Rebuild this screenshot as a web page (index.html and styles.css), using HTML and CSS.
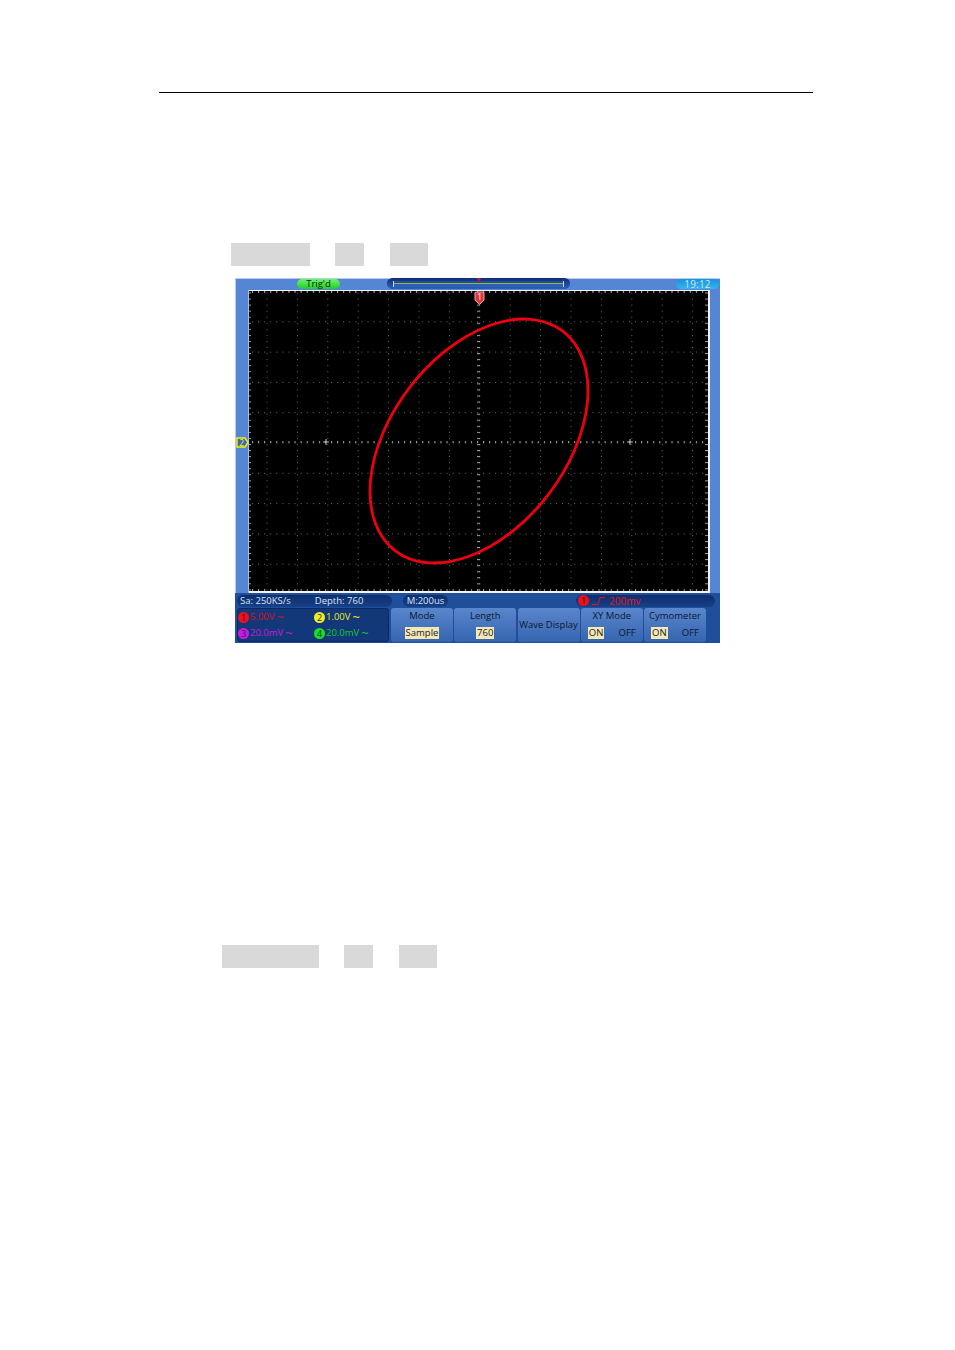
FILE: index.html
```html
<!DOCTYPE html>
<html lang="en">
<head>
<meta charset="utf-8">
<title>Oscilloscope XY mode</title>
<link rel="stylesheet" href="styles.css">
</head>
<body>
<main class="page">
  <div class="rule"></div>
  <div class="redacted first"><span class="w79"></span><span class="w29"></span><span class="w38"></span></div>

  <section class="scope">
    <header class="top">
      <span class="trig">Trig'd</span>
      <div class="timeline"><span class="bar"></span><span class="mark"></span></div>
      <span class="clock">19:12</span>
    </header>

    <div class="plot">
      <svg class="grid" viewBox="0 0 462 303" width="462" height="303" aria-hidden="true">
        <defs>
          <pattern id="hdots" x="4" y="1" width="6.08" height="30.3" patternUnits="userSpaceOnUse">
            <rect x="0" y="0" width="1" height="1" fill="#6e6e6e"/>
          </pattern>
          <pattern id="vdots" x="18.5" y="2.5" width="30.4" height="6.06" patternUnits="userSpaceOnUse">
            <rect x="0" y="0" width="1" height="1" fill="#6e6e6e"/>
          </pattern>
          <pattern id="hticks" x="4" y="0" width="6.08" height="303" patternUnits="userSpaceOnUse">
            <rect x="0" y="0" width="1" height="303" fill="#a4a4a4"/>
          </pattern>
          <pattern id="vticks" x="0" y="2.5" width="462" height="6.06" patternUnits="userSpaceOnUse">
            <rect x="0" y="0" width="462" height="1" fill="#a4a4a4"/>
          </pattern>
        </defs>
        <rect width="462" height="303" fill="#000"/>
        <rect width="460" height="301" fill="url(#hdots)"/>
        <rect width="460" height="301" fill="url(#vdots)"/>
        <!-- centre axes -->
        <rect x="0" y="151" width="460" height="2" fill="url(#hticks)"/>
        <rect x="229" y="3" width="3" height="298" fill="url(#vticks)"/>
        <!-- centre-line crosses -->
        <path d="M78 149V155M75 152H81M382 149V155M379 152H385" stroke="#c0c0c0" stroke-width="1" fill="none"/>
        <!-- edge ticks -->
        <rect x="0" y="1" width="460" height="2" fill="url(#hticks)"/>
        <rect x="0" y="299" width="460" height="2" fill="url(#hticks)"/>
        <rect x="0" y="0" width="3" height="301" fill="url(#vticks)"/>
        <rect x="457" y="0" width="3" height="301" fill="url(#vticks)"/>
        <!-- frame -->
        <rect x="0" y="0" width="462" height="1" fill="#f2f4fa"/>
        <rect x="0" y="301" width="462" height="2" fill="#f2f4fa"/>
        <rect x="0" y="0" width="1" height="303" fill="#b4bccc"/>
        <rect x="460" y="0" width="2" height="303" fill="#f2f4fa"/>
        <ellipse cx="231" cy="151" rx="138.100" ry="87.700" transform="rotate(-52.65 231 151)" fill="none" stroke="#ee0010" stroke-width="2.800"/>
      </svg>
      <svg class="ch-mark" viewBox="0 0 11 14" width="11" height="14" aria-hidden="true">
        <path d="M1 2Q1 1 2 1H9Q10 1 10 2V9L5.500 13.500L1 9Z" fill="#e0343c" stroke="#f0a8a8" stroke-width="1"/>
        <text x="5.500" y="9" class="ch-mark-text">1</text>
      </svg>
      <svg class="level-mark" viewBox="0 0 13 11" width="13" height="11" aria-hidden="true">
        <path d="M1 1H9L12 5.500L9 10H1Z" fill="#3c66b0" stroke="#f2ee10" stroke-width="1.500"/>
        <text x="5.500" y="8.500" class="level-mark-text">2</text>
      </svg>
    </div>

    <div class="status">
      <div class="pill sa"><span>Sa: 250KS/s</span><span>Depth: 760</span></div>
      <div class="pill time">M:200us</div>
      <div class="pill trigger">
        <span class="dot red">1</span>
        <svg class="edge" viewBox="0 0 14 8" width="14" height="8" aria-hidden="true"><path d="M0 7.500H6L8 0.500H13" fill="none" stroke="#e8101c" stroke-width="1"/></svg>
        <span class="trig-level">200mv</span>
      </div>
    </div>

    <div class="controls">
      <div class="channels">
        <div class="chan c1"><span class="dot red">1</span>5.00V<span class="tilde">~</span></div>
        <div class="chan c2"><span class="dot yellow">2</span>1.00V<span class="tilde">~</span></div>
        <div class="chan c3"><span class="dot magenta">3</span>20.0mV<span class="tilde">~</span></div>
        <div class="chan c4"><span class="dot green">4</span>20.0mV<span class="tilde">~</span></div>
      </div>
      <div class="softkeys">
        <div class="softkey"><span>Mode</span><span class="row"><span class="on">Sample</span></span></div>
        <div class="softkey"><span>Length</span><span class="row"><span class="on">760</span></span></div>
        <div class="softkey single"><span>Wave Display</span></div>
        <div class="softkey"><span>XY Mode</span><span class="row split"><span class="on">ON</span><span>OFF</span></span></div>
        <div class="softkey"><span>Cymometer</span><span class="row split"><span class="on">ON</span><span>OFF</span></span></div>
      </div>
    </div>
  </section>

  <div class="redacted second"><span class="w97"></span><span class="w29"></span><span class="w38"></span></div>
</main>
</body>
</html>
```
FILE: styles.css
```css
* { box-sizing: border-box; }
html, body { margin: 0; padding: 0; background: #fff; }
body { width: 955px; height: 1350px; overflow: hidden; font-family: "Open Sans", "Liberation Sans", sans-serif; }
.page { display: flex; flex-direction: column; padding-top: 92px; }
.rule { width: 654px; height: 1px; margin-left: 159px; background: #000; }

.redacted { display: flex; height: 23px; }
.redacted span { display: block; height: 23px; background: #d9d9d9; }
.redacted.first { margin: 150px 0 0 231px; gap: 25px; }
.redacted.first .w29 { margin-right: 1px; }
.redacted.second { margin: 302px 0 0 222px; gap: 25px; }
.redacted.second .w29 { margin-right: 1px; }
.w79 { width: 79px; }
.w97 { width: 97px; }
.w29 { width: 29px; }
.w38 { width: 38px; }

.scope { width: 485px; height: 365px; margin: 12px 0 0 235px; background: #5585d5; display: flex; flex-direction: column; box-shadow: inset 1px 1px 0 #b8cbea; }
.top { height: 12px; display: flex; align-items: flex-start; font-size: 9.500px; line-height: 10px; }
.trig { width: 43px; height: 10px; margin: 1px 0 0 62px; border-radius: 5px; background: linear-gradient(#6cf468, #22cc2c); color: #062a0a; text-align: center; }
.timeline { width: 183px; height: 11px; margin-left: 47px; border-radius: 6px; background: linear-gradient(#102c78, #2c62b6); position: relative; padding: 3px 6px 0; }
.bar { display: block; height: 6px; border: 1px solid #c4d4ea; border-width: 0 1px; background: linear-gradient(#1d4ea0 0, #1d4ea0 2px, #a8ac40 2px, #a8ac40 3px, #2a62b4 3px); }
.mark { position: absolute; left: 90px; top: 0; width: 0; height: 0; border: 2px solid transparent; border-top: 4px solid #e81020; }
.clock { width: 43px; height: 10px; margin: 1px 0 0 106px; border-radius: 5px; background: linear-gradient(#1694dc, #38b4ee); color: #cfe6f6; text-align: center; font-size: 10px; letter-spacing: 0.2px; }

.plot { position: relative; width: 462px; height: 303px; margin-left: 13px; }
.grid { display: block; }
.ch-mark { position: absolute; left: 226px; top: 1px; }
.ch-mark-text { font-size: 9px; font-family: "Open Sans", sans-serif; fill: #fff; text-anchor: middle; }
.level-mark { position: absolute; left: -12px; top: 147px; }
.level-mark-text { font-size: 9px; font-family: "Open Sans", sans-serif; fill: #f2ee10; text-anchor: middle; }

.status { height: 14px; background: #1f4f9a; display: flex; align-items: center; padding: 1px 0 0 2px; font-size: 9.500px; color: #d8e4f4; }
.pill { height: 12px; border-radius: 6px; background: linear-gradient(#0e2e6c, #164088); display: flex; align-items: center; line-height: 12px; }
.pill.sa { width: 155px; padding-left: 3px; gap: 24px; }
.pill.time { width: 45px; margin-left: 11px; justify-content: center; }
.pill.trigger { width: 139px; margin-left: 128px; padding-left: 2px; gap: 3px; color: #e8101c; font-size: 10px; }
.edge { flex: none; }

.dot { flex: none; display: inline-block; width: 11px; height: 11px; border-radius: 50%; font-size: 9px; line-height: 11px; text-align: center; color: #10285a; }
.dot.red { background: #f0101c; color: #40000a; }
.dot.yellow { background: #f0f020; }
.dot.magenta { background: #d018e0; }
.dot.green { background: #18e020; }

.controls { flex: 1; background: #1f4f9a; display: flex; gap: 2px; padding: 1px 0 1px 2px; font-size: 9.500px; line-height: 12px; }
.channels { width: 152px; height: 34px; border-radius: 3px; background: #12387a; border: 1px solid #0c2a60; display: grid; grid-template-columns: 76px 76px; align-items: center; }
.chan { display: flex; align-items: center; gap: 1px; white-space: nowrap; font-size: 9.500px; }
.chan.c1 { color: #d8101c; }
.chan.c2 { color: #e8e820; }
.chan.c3 { color: #c818d8; }
.chan.c4 { color: #14c824; }
.tilde { font-size: 13px; line-height: 10px; margin-left: 1px; }

.softkeys { display: flex; gap: 1.250px; }
.softkey { width: 62px; height: 34px; border-radius: 3px; background: linear-gradient(#5a86cc, #3565b0); color: #0a1830; display: flex; flex-direction: column; align-items: center; justify-content: space-between; padding: 2px 0 3px; white-space: nowrap; }
.softkey.single { justify-content: center; padding: 0; }
.row { display: flex; justify-content: center; width: 100%; }
.row.split { justify-content: space-between; padding: 0 7px; }
.on { background: #f4e8b4; color: #1a2030; padding: 0 1px; }
```
